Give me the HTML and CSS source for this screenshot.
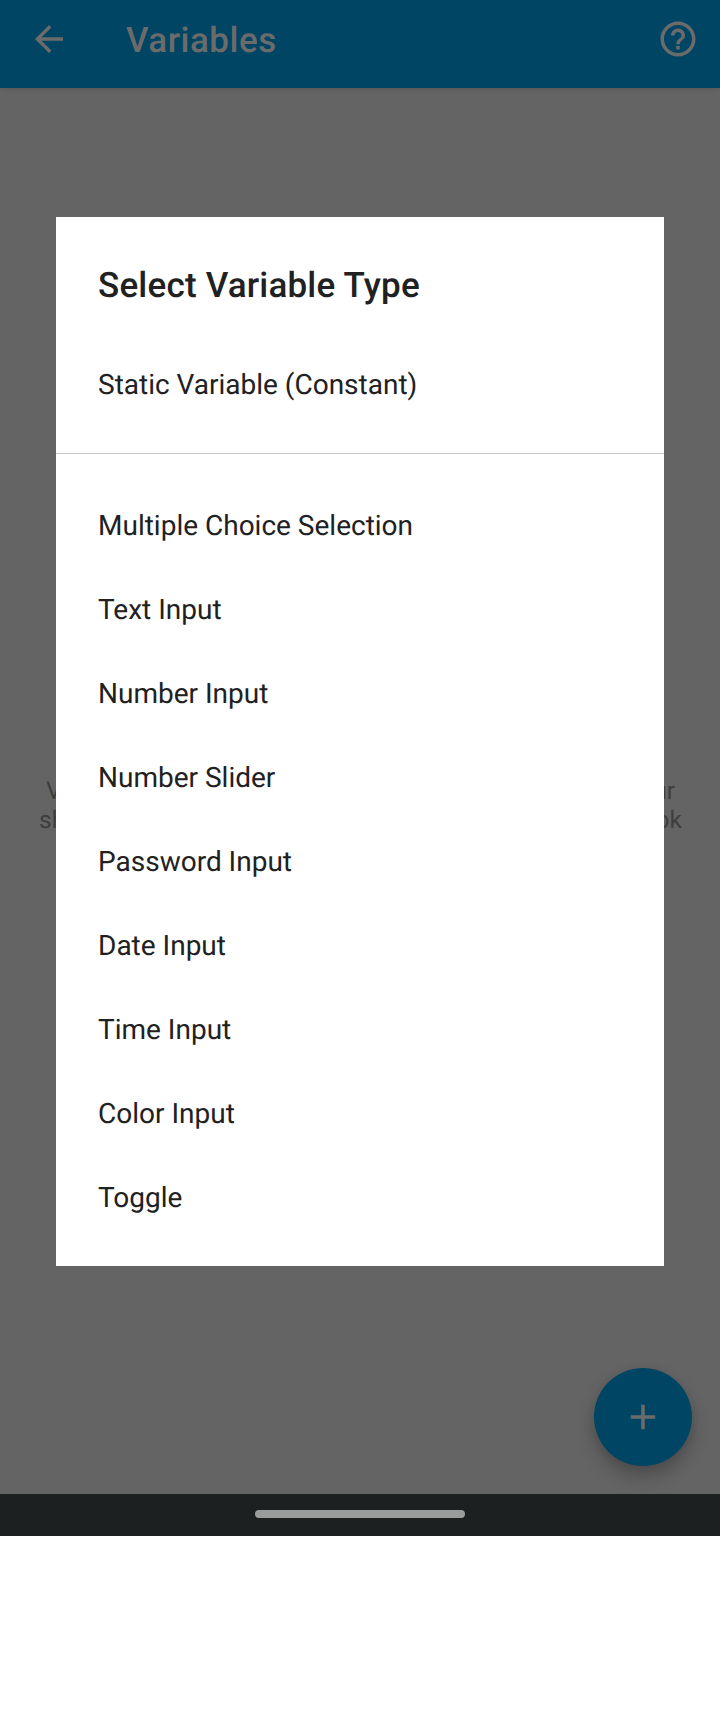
FILE: index.html
```html
<!DOCTYPE html>
<html lang="en">
<head>
<meta charset="utf-8">
<title>Variables</title>
<link rel="stylesheet" href="styles.css">
</head>
<body>
<div class="screen">
  <header class="app-bar">
    <svg class="icon" viewBox="0 0 24 24"><path d="M20 11H7.83l5.59-5.59L12 4l-8 8 8 8 1.41-1.41L7.83 13H20v-2z"/></svg>
    <h1 class="app-title">Variables</h1>
    <svg class="icon" viewBox="0 0 24 24"><path d="M11 18h2v-2h-2v2zm1-16C6.48 2 2 6.48 2 12s4.48 10 10 10 10-4.48 10-10S17.52 2 12 2zm0 18c-4.41 0-8-3.59-8-8s3.59-8 8-8 8 3.59 8 8-3.59 8-8 8zm0-14c-2.21 0-4 1.79-4 4h2c0-1.1.9-2 2-2s2 .9 2 2c0 2-3 1.75-3 5h2c0-2.25 3-2.5 3-5 0-2.21-1.79-4-4-4z"/></svg>
  </header>
  <main class="content">
    <div class="hint">
      <p class="hint-line hint-line-first"><span>V</span><span>ur</span></p>
      <p class="hint-line"><span>sh</span><span>ok</span></p>
    </div>
    <button class="fab" aria-label="Add"><svg class="icon" viewBox="0 0 24 24"><path d="M19 13h-6v6h-2v-6H5v-2h6V5h2v6h6v2z"/></svg></button>
  </main>
  <footer class="nav-bar"><div class="handle"></div></footer>
  <section class="dialog" role="dialog">
    <h2 class="dialog-title">Select Variable Type</h2>
    <ul class="options options-static">
      <li>Static Variable (Constant)</li>
    </ul>
    <ul class="options options-input">
      <li>Multiple Choice Selection</li>
      <li>Text Input</li>
      <li>Number Input</li>
      <li>Number Slider</li>
      <li>Password Input</li>
      <li>Date Input</li>
      <li>Time Input</li>
      <li>Color Input</li>
      <li>Toggle</li>
    </ul>
  </section>
</div>
</body>
</html>
```
FILE: styles.css
```css
* { box-sizing: border-box; }
body { margin: 0; background: #fff; font-family: Roboto, sans-serif; text-rendering: geometricPrecision; }
h1, h2, p, ul { margin: 0; padding: 0; }
.screen {
  position: relative;
  display: flex;
  flex-direction: column;
  height: 1536px;
  overflow: hidden;
}
.app-bar {
  display: flex;
  align-items: center;
  flex: none;
  height: 88px;
  padding: 0 21px 10px 28px;
  background: #004563;
  color: #6b6b6b;
  box-shadow: 0 1px 4px rgba(0, 0, 0, .12);
  z-index: 1;
}
.icon { display: block; width: 42px; height: 42px; fill: #6b6b6b; }
.app-title {
  flex: 1;
  margin-left: 56px;
  padding-top: 3px;
  font-size: 35px;
  font-weight: 500;
  line-height: 42px;
  letter-spacing: .5px;
}
.content {
  display: flex;
  flex-direction: column;
  flex: 1;
  justify-content: space-between;
  background: #646464;
}
.hint {
  padding: 688px 38px 0 39px;
  color: #3e3e3e;
  font-size: 24.5px;
  line-height: 29px;
}
.hint-line { display: flex; justify-content: space-between; }
.hint-line-first { padding: 0 7px; }
.fab {
  display: flex;
  align-items: center;
  justify-content: center;
  align-self: flex-end;
  width: 98px;
  height: 98px;
  margin: 0 28px 28px 0;
  padding: 0;
  border: 0;
  border-radius: 50%;
  background: #004563;
  box-shadow: 0 10px 18px rgba(0, 0, 0, .24), 0 1px 8px rgba(0, 0, 0, .05);
}
.nav-bar {
  display: flex;
  justify-content: center;
  flex: none;
  height: 42px;
  padding-top: 16px;
  background: #1c2021;
  z-index: 1;
}
.handle { width: 210px; height: 8px; border-radius: 4px; background: #9a9c9b; }
.dialog {
  position: absolute;
  top: 217px;
  left: 56px;
  width: 608px;
  height: 1049px;
  padding-top: 48px;
  background: #fff;
  color: #212121;
  z-index: 2;
}
.dialog-title {
  padding: 0 42px;
  font-size: 35px;
  font-weight: 500;
  line-height: 42px;
  letter-spacing: .2px;
}
.options { list-style: none; font-size: 28px; letter-spacing: 0; }
.options li { display: flex; align-items: center; height: 84px; padding: 0 42px; }
.options-static { padding: 35px 0 27px; border-bottom: 1px solid #c4c4c4; }
.options-input { padding-top: 29px; }
```
